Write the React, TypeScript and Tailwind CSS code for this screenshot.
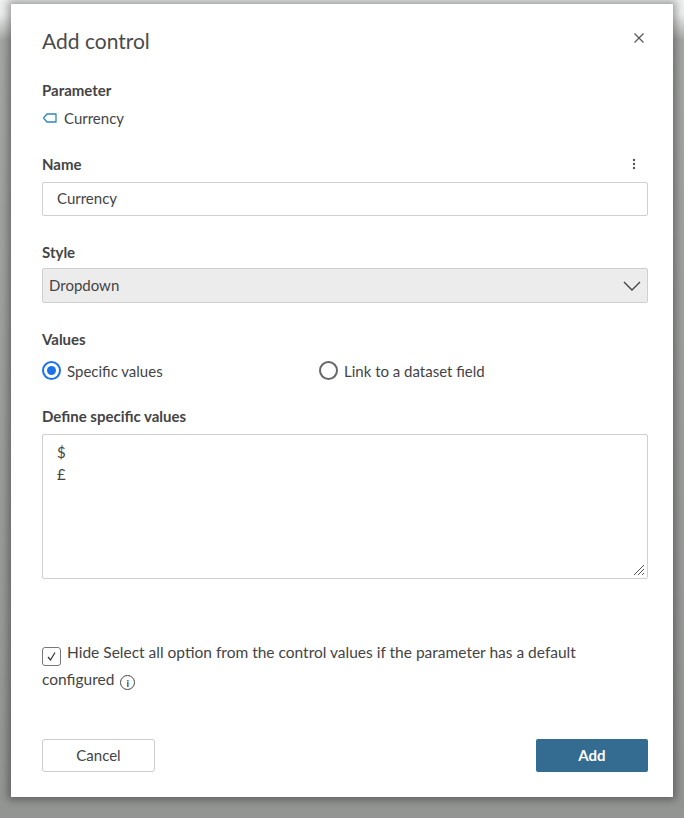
export default function App() {
  const f = { fontFamily: 'Lato, "Open Sans", sans-serif' };
  return (
    <div className="w-[684px] h-[818px] bg-[linear-gradient(#eef0ef_0px,#eef0ef_14px,#a5a7a5_40px,#939593_100%)] pt-[4px] px-[11px] text-[#444]" style={f}>
      <div className="bg-white h-[793px] relative pl-[31px] pr-[25px] shadow-[0_0_8px_3px_rgba(0,0,0,0.35)]">
        <div className="flex items-center justify-between h-[73px]">
          <div className="text-[21px] text-[#4a4a4a]">Add control</div>
          <svg width="12" height="12" viewBox="0 0 12 12" className="mr-[3px] -mt-[5px]"><path d="M1.5 1.5l9 9M10.5 1.5l-9 9" stroke="#555" strokeWidth="1.2"/></svg>
        </div>
        <div className="text-[15px] font-bold mt-[2px]">Parameter</div>
        <div className="flex items-center gap-[6px] mt-[5px] text-[15px]">
          <svg width="16" height="12" viewBox="0 0 16 12"><path d="M5 2h9v8H5L1.5 6z" fill="none" stroke="#2e86c1" strokeWidth="1.3" strokeLinejoin="round"/></svg>
          Currency
        </div>
        <div className="flex justify-between items-center mt-[24px]">
          <div className="text-[15px] font-bold">Name</div>
          <svg width="4" height="14" viewBox="0 0 4 14" className="mr-[12px]"><circle cx="2" cy="3" r="1.2" fill="#555"/><circle cx="2" cy="7" r="1.2" fill="#555"/><circle cx="2" cy="11" r="1.2" fill="#555"/></svg>
        </div>
        <div className="mt-[6px] h-[34px] border border-[#d0d0d0] rounded-[2px] flex items-center px-[14px] text-[15px]">Currency</div>
        <div className="text-[15px] font-bold mt-[25px]">Style</div>
        <div className="mt-[5px] h-[35px] border border-[#cfcfcf] bg-[#ececec] rounded-[2px] flex items-center justify-between pl-[6px] pr-[6px] text-[15px]">
          Dropdown
          <svg width="18" height="10" viewBox="0 0 18 10"><path d="M1 1l8 8 8-8" fill="none" stroke="#444" strokeWidth="1.4"/></svg>
        </div>
        <div className="text-[15px] font-bold mt-[25px]">Values</div>
        <div className="flex items-center mt-[9px] text-[15px]">
          <div className="flex items-center gap-[6px] w-[277px]">
            <span className="w-[19px] h-[19px] rounded-full border-2 border-[#1a73e8] flex items-center justify-center"><span className="w-[9px] h-[9px] rounded-full bg-[#1a73e8]"/></span>
            Specific values
          </div>
          <div className="flex items-center gap-[6px]">
            <span className="w-[19px] h-[19px] rounded-full border-2 border-[#666]"/>
            Link to a dataset field
          </div>
        </div>
        <div className="text-[15px] font-bold mt-[23px]">Define specific values</div>
        <div className="mt-[6px] h-[145px] border border-[#d0d0d0] rounded-[2px] px-[14px] pt-[6px] text-[15px] leading-[22px] relative">
          <div>$</div><div>£</div>
          <svg width="14" height="14" viewBox="0 0 14 14" className="absolute right-[2px] bottom-[2px]"><path d="M13 3L3 13M13 7L7 13M13 11l-2 2" stroke="#555" strokeWidth="1"/></svg>
        </div>
        <div className="mt-[60px] text-[15.5px] leading-[27px] w-[570px]">
          <span className="inline-flex w-[19px] h-[19px] border border-[#777] rounded-[3px] items-center justify-center align-[-4px] mr-[6px]">
            <svg width="11" height="11" viewBox="0 0 11 11"><path d="M2 6l2.5 3L9 1.5" fill="none" stroke="#333" strokeWidth="1.2"/></svg>
          </span>
          Hide Select all option from the control values if the parameter has a default configured
          <span className="inline-flex ml-[6px] w-[15px] h-[15px] rounded-full border border-[#444] items-center justify-center text-[10px] align-[-2px] leading-none font-bold">i</span>
        </div>
        <div className="flex justify-between mt-[46px]">
          <div className="w-[113px] h-[33px] border border-[#ccc] rounded-[3px] flex items-center justify-center text-[15px]">Cancel</div>
          <div className="w-[112px] h-[33px] bg-[#346b91] rounded-[2px] flex items-center justify-center text-[15px] font-bold text-white">Add</div>
        </div>
      </div>
    </div>
  );
}
